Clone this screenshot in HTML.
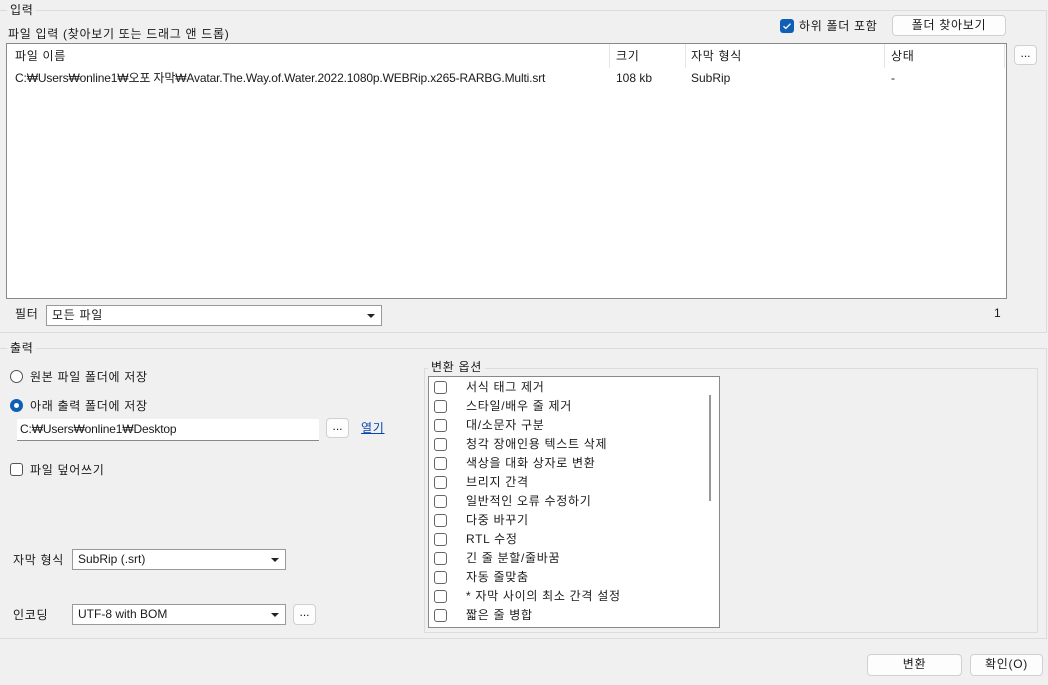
<!DOCTYPE html>
<html><head><meta charset="utf-8"><style>
*{box-sizing:border-box}
body{margin:0;width:1048px;height:685px;background:#f0f0f0;font-family:"Liberation Sans","Noto Sans CJK KR",sans-serif;font-size:12px;color:#1a1a1a;position:relative;overflow:hidden}
.a{position:absolute}
.grp{position:absolute;border:1px solid #dcdcdc}
.gt{position:absolute;background:#f0f0f0;padding:0 3px;line-height:14px;letter-spacing:0.7px}
.btn{position:absolute;background:#fdfdfd;border:1px solid #d0d0d0;border-radius:4px;text-align:center;line-height:18px;letter-spacing:0.7px}
.cb{position:absolute;width:13px;height:13px;border:1px solid #555;border-radius:3px;background:#fff}
.combo{position:absolute;background:#fff;border:1px solid #999;padding-left:5px;line-height:19px;letter-spacing:0.7px}
.combo:after{content:"";position:absolute;right:6px;top:8px;border-left:4px solid transparent;border-right:4px solid transparent;border-top:4px solid #222}
.t{position:absolute;white-space:nowrap;line-height:14px;letter-spacing:0.7px}
.l{letter-spacing:0}
</style></head><body>
<div class="grp" style="left:-1px;top:10px;width:1048px;height:323px"></div>
<div class="gt" style="left:7px;top:3px">입력</div>
<div class="t" style="left:8px;top:27px">파일 입력 (찾아보기 또는 드래그 앤 드롭)</div>
<div class="a" style="left:780px;top:19px;width:14px;height:14px;background:#0f5fb5;border-radius:3px"><svg width="14" height="14"><path d="M3.5 7.2l2.3 2.3 4.7-4.8" stroke="#fff" stroke-width="1.3" fill="none"/></svg></div>
<div class="t" style="left:799px;top:19px">하위 폴더 포함</div>
<div class="btn" style="left:892px;top:15px;width:114px;height:21px">폴더 찾아보기</div>
<div class="a" style="left:6px;top:43px;width:1001px;height:256px;background:#fff;border:1px solid #8a8a8a"></div>
<div class="a" style="left:609px;top:44px;width:1px;height:24px;background:#e5e5e5"></div>
<div class="a" style="left:685px;top:44px;width:1px;height:24px;background:#e5e5e5"></div>
<div class="a" style="left:884px;top:44px;width:1px;height:24px;background:#e5e5e5"></div>
<div class="a" style="left:1004px;top:44px;width:1px;height:24px;background:#e5e5e5"></div>
<div class="t" style="left:15px;top:49px">파일 이름</div>
<div class="t" style="left:616px;top:49px">크기</div>
<div class="t" style="left:691px;top:49px">자막 형식</div>
<div class="t" style="left:891px;top:49px">상태</div>
<div class="t" style="left:15px;top:71px;letter-spacing:-0.15px">C:₩Users₩online1₩오포 자막₩Avatar.The.Way.of.Water.2022.1080p.WEBRip.x265-RARBG.Multi.srt</div>
<div class="t l" style="left:616px;top:71px">108 kb</div>
<div class="t l" style="left:691px;top:71px">SubRip</div>
<div class="t" style="left:891px;top:71px">-</div>
<div class="btn" style="left:1014px;top:45px;width:23px;height:20px;line-height:14px;letter-spacing:0">...</div>
<div class="t" style="left:15px;top:307px">필터</div>
<div class="combo" style="left:46px;top:305px;width:336px;height:21px">모든 파일</div>
<div class="t" style="left:994px;top:306px">1</div>

<div class="grp" style="left:-1px;top:348px;width:1048px;height:291px"></div>
<div class="gt" style="left:7px;top:341px">출력</div>
<div class="a" style="left:10px;top:370px;width:13px;height:13px;border:1px solid #555;border-radius:50%;background:#fff"></div>
<div class="t" style="left:30px;top:370px">원본 파일 폴더에 저장</div>
<div class="a" style="left:10px;top:399px;width:13px;height:13px;border-radius:50%;background:#0f5fb5"><div class="a" style="left:4px;top:4px;width:5px;height:5px;border-radius:50%;background:#fff"></div></div>
<div class="t" style="left:30px;top:399px">아래 출력 폴더에 저장</div>
<div class="a" style="left:17px;top:419px;width:302px;height:22px;background:#fff;border-bottom:1px solid #888;padding-left:3px;line-height:21px;letter-spacing:-0.15px">C:₩Users₩online1₩Desktop</div>
<div class="btn" style="left:326px;top:418px;width:23px;height:20px;line-height:14px;letter-spacing:0">...</div>
<div class="t" style="left:361px;top:421px;color:#0645ad;text-decoration:underline">열기</div>
<div class="cb" style="left:10px;top:463px"></div>
<div class="t" style="left:30px;top:463px">파일 덮어쓰기</div>
<div class="t" style="left:13px;top:553px">자막 형식</div>
<div class="combo l" style="left:72px;top:549px;width:214px;height:21px">SubRip (.srt)</div>
<div class="t" style="left:13px;top:608px">인코딩</div>
<div class="combo l" style="left:72px;top:604px;width:214px;height:21px">UTF-8 with BOM</div>
<div class="btn" style="left:293px;top:604px;width:23px;height:21px;line-height:14px;letter-spacing:0">...</div>

<div class="grp" style="left:424px;top:368px;width:614px;height:265px"></div>
<div class="gt" style="left:428px;top:360px">변환 옵션</div>
<div class="a" style="left:428px;top:376px;width:292px;height:252px;background:#fff;border:1px solid #888"></div>
<div class="a" style="left:709px;top:395px;width:2px;height:106px;background:#999"></div>
<div id="opts"></div>
<div class="btn" style="left:867px;top:654px;width:95px;height:22px">변환</div>
<div class="btn" style="left:970px;top:654px;width:73px;height:22px">확인(O)</div>
<script>
var o=["서식 태그 제거","스타일/배우 줄 제거","대/소문자 구분","청각 장애인용 텍스트 삭제","색상을 대화 상자로 변환","브리지 간격","일반적인 오류 수정하기","다중 바꾸기","RTL 수정","긴 줄 분할/줄바꿈","자동 줄맞춤","* 자막 사이의 최소 간격 설정","짧은 줄 병합"],h="";
o.forEach(function(s,i){var y=380+i*19;h+='<div class="cb" style="left:434px;top:'+(y+1)+'px;border-color:#666"></div><div class="t" style="left:466px;top:'+y+'px">'+s+'</div>';});
document.getElementById("opts").innerHTML=h;
</script>
</body></html>
